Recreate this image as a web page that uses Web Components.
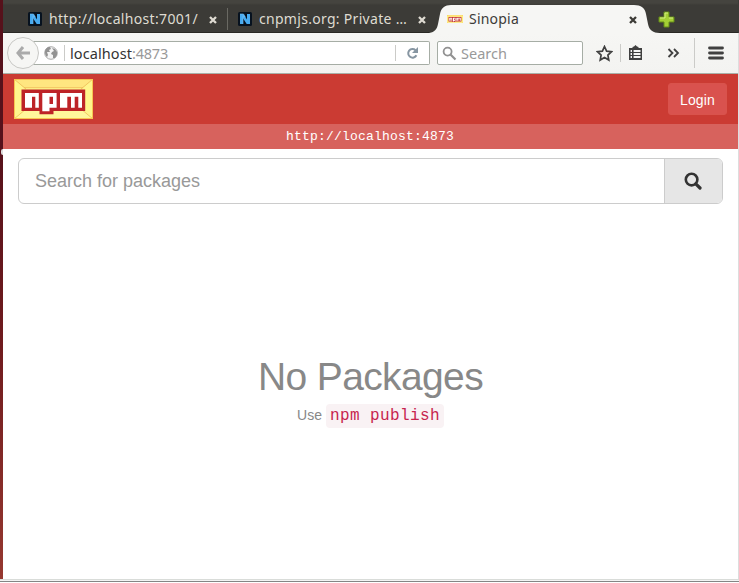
<!DOCTYPE html>
<html lang="en"><head><meta charset="utf-8"><title>Sinopia</title>
<style>html,body{margin:0;height:100%;overflow:hidden;background:#fff}</style></head>
<body><app-window></app-window>
<script>
function define(name, html, setup) {
  const t = document.createElement('template');
  t.innerHTML = html;
  customElements.define(name, class extends HTMLElement {
    constructor() {
      super();
      this.attachShadow({mode: 'open'}).append(t.content.cloneNode(true));
    }
    connectedCallback() { if (setup) setup(this, this.shadowRoot); }
  });
}

/* One line of text, tracked so that it fills the given width. */
define('fit-text', `<style>:host{display:block;white-space:pre;flex:none}span{display:inline-block}</style><span><slot></slot></span>`, (el, root) => {
  const w = +el.getAttribute('w'), s = root.querySelector('span');
  s.style.letterSpacing = '0px';
  const n = el.textContent.length;
  s.style.letterSpacing = ((w - s.getBoundingClientRect().width) / n) + 'px';
  el.style.width = w + 'px';
});

define('node-icon', `<style>:host{display:block;width:14px;height:14px;flex:none}svg{display:block}</style>
<svg width="14" height="14"><rect width="14" height="14" rx="1.5" fill="#07121f"/><path d="M2 2H5.5L9 7.6V2H12V12H8.7L5 6.3V12H2Z" fill="#46aaf0"/><path d="M2 2H5.5L7 4.4V5L5 3.5V12" fill="none" stroke="#78c8fa" stroke-width=".6"/></svg>`);

define('npm-logo', `<style>:host{display:block;flex:none}svg{display:block;width:100%;height:100%}</style>
<svg viewBox="0 0 79 40" preserveAspectRatio="none"><rect width="79" height="40" fill="#fff58c"/>
<path d="M0 0H79L69 9H10Z" fill="#ffe680"/><path d="M0 40H79L69 31H10Z" fill="#fff79c"/>
<path d="M0 0L12 10M79 0L67 10M0 40L12 30M79 40L67 30M10 8.7H69" stroke="#edbd56" stroke-width=".8" fill="none"/>
<rect x=".5" y=".5" width="78" height="39" fill="none" stroke="#f7c552"/>
<path d="M7.5 10.5H71.2V32H39.5V35.3H25.5V32H7.5Z" fill="#bd2327"/>
<path fill-rule="evenodd" fill="#fff" d="M11 14H24.8V28.8H21.3V17.7H18V28.8H11ZM28.3 14H42.6V28.8H35.5V32.3H28.3ZM35.5 17.7V25H39V17.7ZM46 14H68V28.8H64.3V17.7H60.7V28.8H57V17.7H53.3V28.8H46Z"/></svg>`);

define('tab-close', `<style>:host{display:block;width:8px;height:8px;flex:none}svg{display:block}</style>
<svg width="8" height="8"><path d="M1 1L7 7M7 1L1 7" stroke="currentColor" stroke-width="2.3"/></svg>`);

define('tab-strip', `<style>
:host{display:flex;height:33px;background:linear-gradient(#45443f 0,#45443f 3px,#3c3b37 5px);font:14px "Noto Sans",sans-serif;color:#dfdbd2;position:relative}
.tab{display:flex;align-items:center;box-sizing:border-box;padding-top:5px;height:33px;flex:none}
.tab fit-text{line-height:20px;margin-left:7px}
tab-close{margin-left:auto;margin-top:1px}
.a{width:224px;padding-left:25px;padding-right:10px}
.b{width:208px;padding-left:10px;padding-right:10px}
.sep{width:1px;height:22px;margin-top:8px;background:#6a6963;flex:none}
.c{position:relative;width:223px;padding:5px 22px 0 11px;color:#3c3b37}
.c>*{position:relative}.shape{position:absolute!important;left:-7px;top:4px}
npm-logo{width:16px;height:8px}.c fit-text{margin-left:6px}
.plus{margin:11px 0 0 -1px;position:relative;display:block}
.under{position:absolute;left:0;right:0;bottom:0;height:1px;background:#292824}
</style><div class="under"></div>
<div class="tab a"><node-icon></node-icon><fit-text w="149">http://localhost:7001/</fit-text><tab-close></tab-close></div><div class="sep"></div>
<div class="tab b"><node-icon></node-icon><fit-text w="148">cnpmjs.org: Private …</fit-text><tab-close></tab-close></div>
<div class="tab c"><svg class="shape" width="236" height="29"><path d="M0 29C6 28 8 25 9 20L11 10C12 4 16 1 22 1H205C212 1 216 4 217 10L219 20C220 26 224 29 231 29Z" fill="#f6f6f4"/></svg><npm-logo></npm-logo><fit-text w="50">Sinopia</fit-text><tab-close></tab-close></div>
<svg class="plus" width="17" height="17"><path d="M6 1H11V6H16V11H11V16H6V11H1V6H6Z" fill="#a4ce35" stroke="#648c18"/><path d="M7 7V2H10M2 7H7M11 7H15" stroke="#d2ec82" fill="none"/></svg>`);

define('nav-bar', `<style>
:host{display:flex;align-items:center;height:41px;box-sizing:border-box;background:linear-gradient(#f6f6f4,#f3f3f1);border-bottom:1px solid #a9b0a8;font:14.5px "Noto Sans",sans-serif;color:#333;padding:0 12px 0 4px}
svg{display:block;flex:none}
.back{width:30px;height:30px;border:1px solid #c8c8c5;border-radius:50%;background:#f6f6f4;display:grid;place-items:center;flex:none;position:relative}
.field{height:24px;box-sizing:border-box;border:1px solid #a6ada5;background:#fff;display:flex;align-items:center;flex:none}
.url{width:398px;margin-left:-7px;padding:0 10px 0 12px;border-left:0;border-radius:0 2px 2px 0}
.v{width:1px;height:16px;background:#cbcbc8;flex:none}
.g{color:#999}
.find{width:146px;margin-left:7px;padding-left:4px;border-radius:2px;color:#999}
fit-text{line-height:20px}
</style>
<div class="back"><svg width="16" height="16"><path d="M8 2L3 8L8 14M3 8H15" fill="none" stroke="#aaa" stroke-width="3"/></svg></div>
<div class="field url">
<svg width="14" height="14" viewBox="0 0 14 14"><circle cx="7" cy="7" r="6.3" fill="#f4f4f4" stroke="#aaa"/><path d="M1 6C1 3 3 1 6 1L7 3L5 4L6 6L3 6L4 9L3 11C1.7 10 1 8 1 6ZM8 2L11 3L13 6V9L11 12L9 12L9 9L7 8L8 6L10 5Z" fill="#929292"/></svg>
<div class="v" style="margin:0 5px 0 6px"></div><fit-text w="62">localhost</fit-text><fit-text class="g" w="36">:4873</fit-text>
<div class="v" style="margin-left:auto;margin-right:10px"></div>
<svg width="13" height="14" viewBox="0 0 13 14"><path d="M9.5 4.2A4.3 4.3 0 1 0 10.4 9.2" fill="none" stroke="#8796a2" stroke-width="2"/><path d="M12 1V7H6Z" fill="#8796a2"/></svg></div>
<div class="field find"><svg width="15" height="15"><circle cx="5.6" cy="5.6" r="4" fill="none" stroke="#929292" stroke-width="1.8"/><path d="M8.5 8.5L13.5 13.5" stroke="#929292" stroke-width="2.2"/></svg><fit-text w="46" style="margin-left:4px">Search</fit-text></div>
<svg style="margin-left:13px" width="17" height="17"><path d="M8.5 1.5L10.6 6.1L15.5 6.7L11.9 10.1L12.8 15.1L8.5 12.6L4.2 15.1L5.1 10.1L1.5 6.7L6.4 6.1Z" fill="none" stroke="#404040" stroke-width="1.7"/></svg>
<div class="v" style="margin:0 7px;height:18px"></div>
<svg width="15" height="16"><path d="M1 3H4.5V2L6 1.5 7.5 0 9 1.5 10.5 2V3H14V15H1Z" fill="#404040"/><path d="M2.6 6H4M5.6 6H12.5M2.6 9H4M5.6 9H12.5M2.6 12H4M5.6 12H12.5" stroke="#f6f6f4" stroke-width="1.8"/></svg>
<svg style="margin-left:24px" width="13" height="10"><path d="M1.5 1L5.5 5L1.5 9M7 1L11 5L7 9" stroke="#404040" stroke-width="1.8" fill="none"/></svg>
<div class="v" style="margin-left:14px;height:30px"></div>
<svg style="margin-left:13px" width="16" height="14"><path d="M1.5 2H14.5M1.5 7H14.5M1.5 12H14.5" stroke="#404040" stroke-width="2.8" stroke-linecap="round"/></svg>`);

define('site-header', `<style>
:host{display:block;font-family:"Liberation Sans",Arial,sans-serif}
.top{height:50px;background:#cb3b33;display:flex;align-items:center;justify-content:space-between;box-sizing:border-box;padding:0 11px}
npm-logo{width:79px;height:40px}
.login{width:59px;height:32px;box-sizing:border-box;border:1px solid #d9534c;background:#d9524e;border-radius:3px;color:#fff;font-size:14px;line-height:32px;display:flex;justify-content:center}
.sub{height:25px;background:#d7625d;color:#fff;display:flex;justify-content:center;font:13px/25px "Liberation Mono",monospace;padding-right:1px}
</style><div class="top"><npm-logo></npm-logo><div class="login"><fit-text w="35">Login</fit-text></div></div><div class="sub"><fit-text w="168">http://localhost:4873</fit-text></div>`);

define('package-search', `<style>
:host{display:flex;box-sizing:border-box;height:46px;margin:9px 15px 0;border:1px solid #ccc;border-radius:6px;overflow:hidden;font:18px/44px "Liberation Sans",Arial,sans-serif;color:#999}
.in{flex:1;padding-left:16px}.btn{width:57px;border-left:1px solid #ccc;background:#e6e6e6;display:grid;place-items:center}
svg{display:block;margin-right:1px}
</style><div class="in"><fit-text w="165">Search for packages</fit-text></div><div class="btn"><svg width="18" height="18"><circle cx="7.6" cy="7.6" r="5.8" fill="none" stroke="#333" stroke-width="2.6"/><path d="M11.8 11.8L16 16" stroke="#333" stroke-width="3.2" stroke-linecap="round"/></svg></div>`);

define('empty-state', `<style>
:host{display:flex;flex-direction:column;align-items:center;padding-top:151px;color:#888;font:14px/24px "Liberation Sans",Arial,sans-serif}
.h{font-size:39px;line-height:44px}
.row{display:flex;margin-top:5px;align-items:center}
.row>fit-text{line-height:22px;margin-top:-2px}
code{font:16px/24px "Liberation Mono",monospace;color:#c7254e;background:#f9f2f4;border-radius:4px;padding:0 4px;margin-left:4px;height:24px}
</style><fit-text class="h" w="225">No Packages</fit-text><div class="row"><fit-text w="25">Use</fit-text><code><fit-text w="110">npm publish</fit-text></code></div>`);

define('app-window', `<style>
:host{display:grid;grid-template-columns:3px 735px 1px;grid-template-rows:579px 2px 1px 1px;width:739px;height:583px;background:#fff}
.desk{background:linear-gradient(#56111b 0,#56111b 25%,#701b1e 60%,#963830)}
.desk i{display:block;width:2px;height:6px;margin-top:149px;margin-left:1px;background:#ddd;border-radius:2px 0 0 2px}
.desk{display:flow-root}
.edge{background:linear-gradient(#3c3b37 33px,#ddd 33px)}
.l1{grid-column:1/-1;background:linear-gradient(#d9dcd9 1px,#f4f4f4 1px)}.l2{grid-column:1/-1;background:#858585}
</style><div class="desk"><i></i></div><main><tab-strip></tab-strip><nav-bar></nav-bar><site-header></site-header><package-search></package-search><empty-state></empty-state></main><div class="edge"></div><div class="l1"></div><div class="l2"></div>`);
</script></body></html>
